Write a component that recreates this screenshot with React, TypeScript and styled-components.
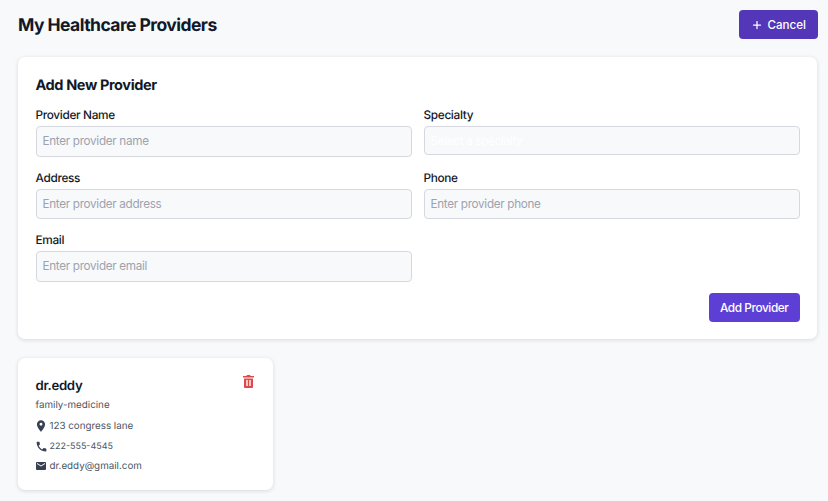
import styled, { createGlobalStyle } from "styled-components";
import { MdEmail, MdLocationOn, MdPhone } from "react-icons/md";
import { FiPlus } from "react-icons/fi";

const GlobalStyle = createGlobalStyle`
  html, body {
    margin: 0;
    height: 100%;
    background: #f8f9fb;
    font-family: Inter, "Liberation Sans", sans-serif;
    color: #111827;
    text-rendering: geometricPrecision;
  }
  * { box-sizing: border-box; }
`;

const Page = styled.div`
  padding: 10px 10px 10px 18px;
  display: flex;
  flex-direction: column;
`;

const Header = styled.header`
  display: flex;
  justify-content: space-between;
  align-items: center;
  margin-bottom: 18px;
`;

const Heading = styled.h1`
  margin: 0;
  padding-top: 2px;
  font-size: 17.5px;
  line-height: 27px;
  font-weight: 700;
  letter-spacing: -0.55px;
`;

const Button = styled.button<{ $dark?: boolean }>`
  display: inline-flex;
  align-items: center;
  justify-content: center;
  gap: 5px;
  height: 29px;
  padding: 0 ${(p) => (p.$dark ? "12px" : "11px")};
  border: 0;
  border-radius: 4px;
  background: ${(p) => (p.$dark ? "#5337b8" : "#5e3fd6")};
  color: #fff;
  font-family: inherit;
  font-size: ${(p) => (p.$dark ? "11.6px" : "11.8px")};
  letter-spacing: ${(p) => (p.$dark ? "0" : "-0.4px")};
  font-weight: 500;
`;

const FormCard = styled.section`
  background: #fff;
  border-radius: 7px;
  margin-right: 1px;
  padding: 18px 17.5px;
  height: 282px;
  box-shadow: 0 1px 4px rgba(17, 24, 39, 0.14);
`;

const FormTitle = styled.h2`
  margin: 1px 0 11px;
  font-size: 14.5px;
  line-height: 20px;
  font-weight: 700;
  letter-spacing: -0.38px;
`;

const FormGrid = styled.div`
  display: grid;
  grid-template-columns: 1fr 1fr;
  column-gap: 12px;
  row-gap: 13px;
`;

const Field = styled.div`
  display: flex;
  flex-direction: column;
  gap: 2px;
`;

const Label = styled.label`
  font-size: 11.8px;
  line-height: 17px;
  font-weight: 500;
  letter-spacing: -0.32px;
`;

const Input = styled.input`
  height: 30.5px;
  width: 100%;
  padding: 0 6px;
  border: 1px solid #d5d8de;
  border-radius: 4px;
  background: #f8f9fb;
  font-family: inherit;
  font-size: 11.7px;
  letter-spacing: -0.3px;
  &::placeholder { color: #9ca3af; opacity: 1; }
`;

const SpecialtyBox = styled(Input)`
  height: 29px;
  &::placeholder { color: #fff; }
`;

const FormActions = styled.div`
  display: flex;
  justify-content: flex-end;
  margin-top: 11.5px;
`;

const ProviderCard = styled.article`
  width: 255px;
  height: 132px;
  margin-top: 19px;
  padding: 18.5px 17.5px;
  background: #fff;
  border-radius: 7px;
  box-shadow: 0 1px 4px rgba(17, 24, 39, 0.14);
`;

const CardTop = styled.div`
  display: flex;
  justify-content: space-between;
  align-items: flex-start;
`;

const ProviderName = styled.h3`
  margin: 0;
  font-size: 13.2px;
  line-height: 18px;
  font-weight: 600;
  letter-spacing: -0.3px;
`;

const DeleteButton = styled.span`
  display: flex;
  color: #dc4a4a;
  margin: -1.5px 2px 0 0;
`;

const Specialty = styled.p`
  margin: 1px 0 0;
  font-size: 9.8px;
  line-height: 20.5px;
  color: #4b5563;
`;

const InfoRow = styled.div<{ $small?: boolean }>`
  display: flex;
  align-items: center;
  height: 20.2px;
  font-size: ${(p) => (p.$small ? "8.96px" : "9.8px")};
  color: #4b5563;
`;

const IconSlot = styled.span`
  display: flex;
  justify-content: center;
  width: 11px;
  margin-right: 3px;
  color: #374151;
  svg { flex: none; }
`;

const TrashIcon = () => (
  <svg width="11" height="13" viewBox="0 0 11 13" fill="currentColor">
    <path d="M4 0h3l.6 1H11v1.6H0V1h3.4z" />
    <path d="M1 3.4h9V12a1 1 0 0 1-1 1H2a1 1 0 0 1-1-1zM3.3 5v6h1.4V5zm3 0v6h1.4V5z" fillRule="evenodd" />
  </svg>
);

export default function App() {
  return (
    <Page>
      <GlobalStyle />
      <Header>
        <Heading>My Healthcare Providers</Heading>
        <Button $dark>
          <FiPlus size={12} strokeWidth={2.5} />
          Cancel
        </Button>
      </Header>
      <FormCard>
        <FormTitle>Add New Provider</FormTitle>
        <FormGrid>
          <Field>
            <Label>Provider Name</Label>
            <Input placeholder="Enter provider name" />
          </Field>
          <Field>
            <Label>Specialty</Label>
            <SpecialtyBox placeholder="Select a specialty" />
          </Field>
          <Field>
            <Label>Address</Label>
            <Input placeholder="Enter provider address" />
          </Field>
          <Field>
            <Label>Phone</Label>
            <Input placeholder="Enter provider phone" />
          </Field>
          <Field>
            <Label>Email</Label>
            <Input placeholder="Enter provider email" />
          </Field>
        </FormGrid>
        <FormActions>
          <Button>Add Provider</Button>
        </FormActions>
      </FormCard>
      <ProviderCard>
        <CardTop>
          <ProviderName>dr.eddy</ProviderName>
          <DeleteButton>
            <TrashIcon />
          </DeleteButton>
        </CardTop>
        <Specialty>family-medicine</Specialty>
        <InfoRow><IconSlot><MdLocationOn size={14} /></IconSlot>123 congress lane</InfoRow>
        <InfoRow $small><IconSlot><MdPhone size={13} /></IconSlot>222-555-4545</InfoRow>
        <InfoRow><IconSlot><MdEmail size={12} /></IconSlot>dr.eddy@gmail.com</InfoRow>
      </ProviderCard>
    </Page>
  );
}
